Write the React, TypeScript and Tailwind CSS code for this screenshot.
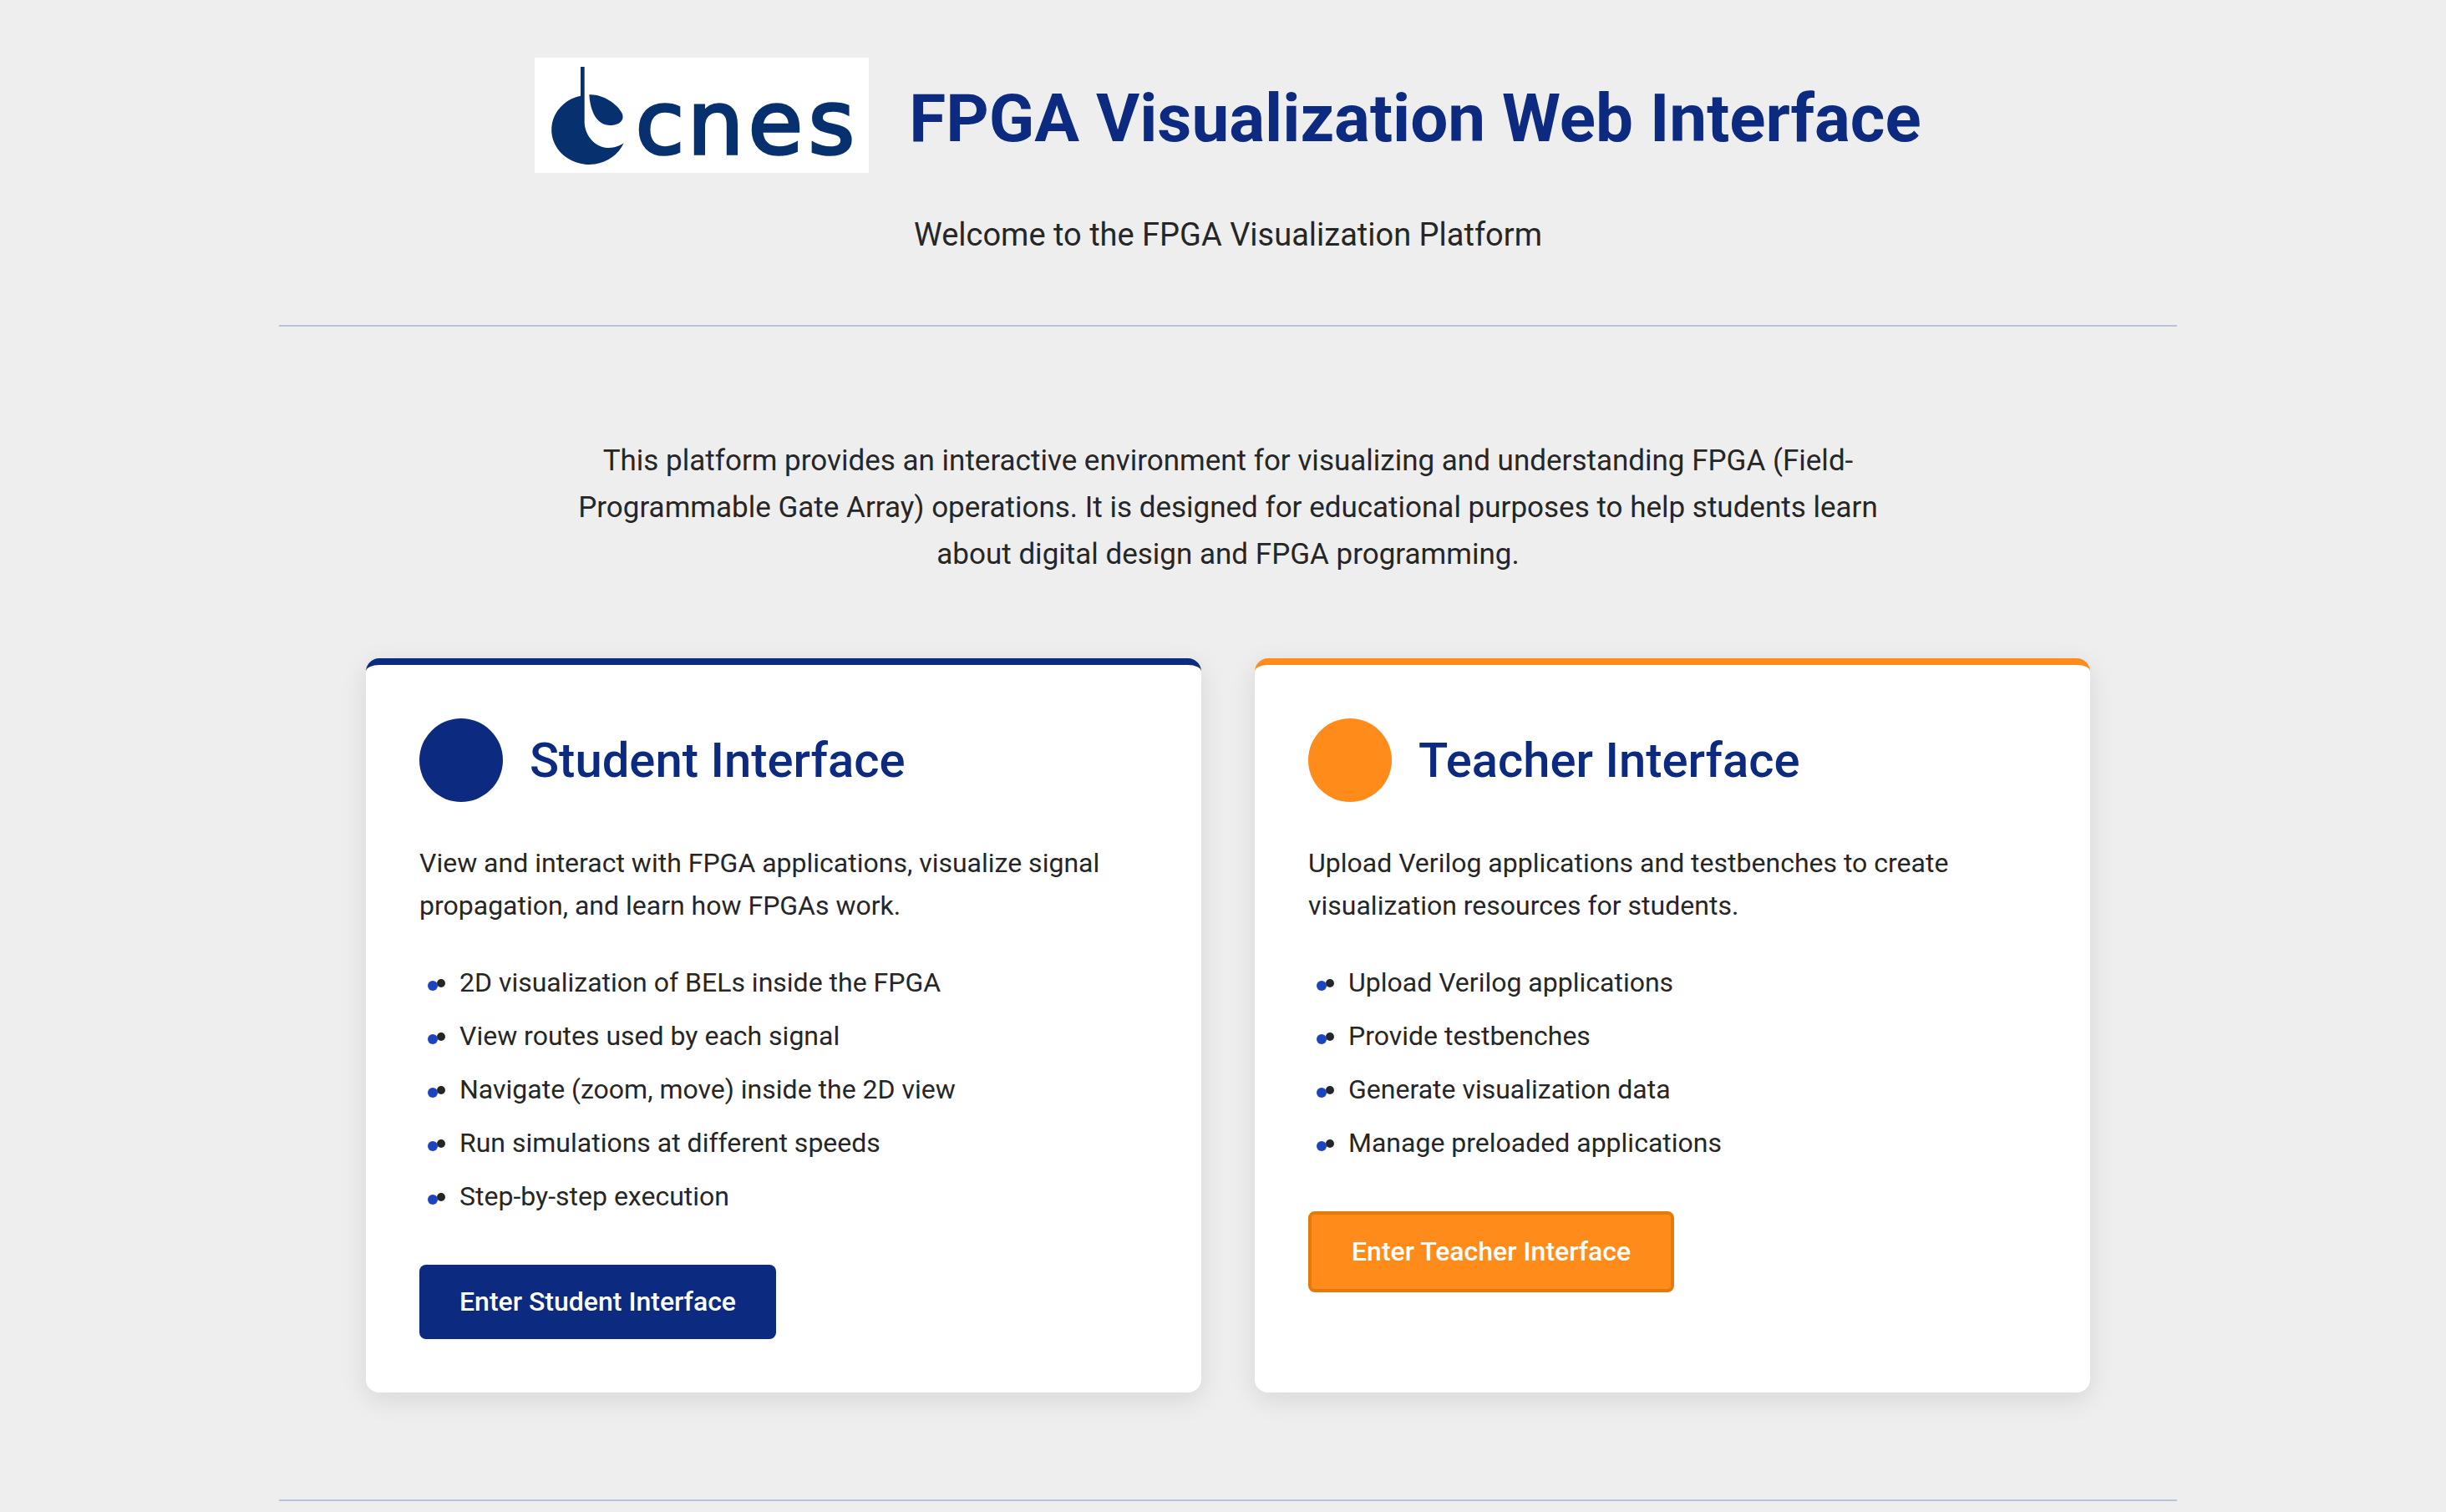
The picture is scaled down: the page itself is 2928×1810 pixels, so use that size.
type CardProps = {
  title: string;
  description: string;
  features: string[];
  action: string;
  href: string;
  accent: string;
  dot: string;
  button: string;
};

const cards: CardProps[] = [
  {
    title: "Student Interface",
    description:
      "View and interact with FPGA applications, visualize signal propagation, and learn how FPGAs work.",
    features: [
      "2D visualization of BELs inside the FPGA",
      "View routes used by each signal",
      "Navigate (zoom, move) inside the 2D view",
      "Run simulations at different speeds",
      "Step-by-step execution",
    ],
    action: "Enter Student Interface",
    href: "#student",
    accent: "border-[#0b2a80]",
    dot: "bg-[#0b2a80]",
    button: "bg-[#0b2a80]",
  },
  {
    title: "Teacher Interface",
    description:
      "Upload Verilog applications and testbenches to create visualization resources for students.",
    features: [
      "Upload Verilog applications",
      "Provide testbenches",
      "Generate visualization data",
      "Manage preloaded applications",
    ],
    action: "Enter Teacher Interface",
    href: "#teacher",
    accent: "border-[#ff8c1a]",
    dot: "bg-[#ff8c1a]",
    button: "bg-[#ff8c1a] border-4 border-[#e27b0a]",
  },
];

function Logo() {
  return (
    <svg
      viewBox="45 57 1200 414"
      className="w-[400px] shrink-0 overflow-visible bg-white"
      role="img"
      aria-label="cnes"
    >
      <g fill="#06306e">
        <path d="M210 90H224V290C226 340 265 381 312 381C333 381 350 374 365 364A135 125 0 1 1 210 194Z" />
        <path d="M241 190C290 188 340 222 359 257C370 284 345 300 316 300C270 300 245 255 241 190Z" />
        <text
          x="407 594 812 1028"
          y="402"
          fontFamily="DejaVu Sans, sans-serif"
          fontSize="318"
          stroke="#06306e"
          strokeWidth="11"
        >
          cnes
        </text>
      </g>
    </svg>
  );
}

function Card({ title, description, features, action, href, accent, dot, button }: CardProps) {
  return (
    <section
      className={`rounded-2xl border-t-8 bg-white p-16 shadow-[0_8px_32px_rgba(0,0,0,0.1)] ${accent}`}
    >
      <div className="flex items-center gap-8">
        <span className={`size-[100px] shrink-0 rounded-full ${dot}`} />
        <h2 className="text-[58px] leading-[84px] font-medium text-[#0b2a80]">{title}</h2>
      </div>
      <p className="mt-12 text-[32px] leading-[51px]">{description}</p>
      <ul className="mt-[41px] list-disc space-y-[13px] pl-12 text-[32px] leading-[51px]">
        {features.map((feature) => (
          <li key={feature} className="relative">
            <span className="absolute top-[23px] -left-[38px] size-3 rounded-full bg-[#1a44c2]" />
            {feature}
          </li>
        ))}
      </ul>
      <a
        href={href}
        className={`mt-14 inline-block rounded-lg px-12 py-[19px] text-[32px] leading-[51px] font-medium text-white ${button}`}
      >
        {action}
      </a>
    </section>
  );
}

export default function App() {
  return (
    <div className="min-h-screen bg-[#eeeeee] pl-3 font-['Roboto',sans-serif] text-[#262626]">
      <div className="mx-auto max-w-[2400px] px-16">
        <header className="border-b-2 border-[#b8c2dc] pt-[69px] pb-[76px] text-center">
          <div className="flex items-center justify-center gap-12">
            <Logo />
            <h1 className="pt-2 text-[80px] leading-[100px] font-bold text-[#0b2a80]">
              FPGA Visualization Web Interface
            </h1>
          </div>
          <p className="mt-[42px] text-[38px] leading-[64px]">Welcome to the FPGA Visualization Platform</p>
        </header>
        <main className="px-[104px] pt-[133px] pb-32">
          <p className="mx-auto mb-24 max-w-[1600px] text-center text-[35px] leading-[56px]">
            This platform provides an interactive environment for visualizing and understanding FPGA
            (Field-Programmable Gate Array) operations. It is designed for educational purposes to help
            students learn about digital design and FPGA programming.
          </p>
          <div className="grid grid-cols-2 gap-16">
            {cards.map((card) => (
              <Card key={card.title} {...card} />
            ))}
          </div>
        </main>
        <footer className="border-t-2 border-[#b8c2dc]" />
      </div>
    </div>
  );
}
